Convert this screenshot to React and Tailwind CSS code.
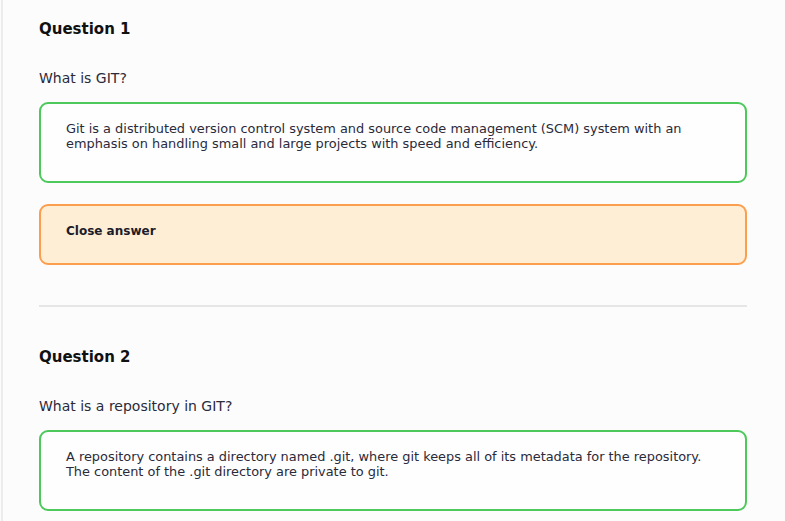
import React from "react";

const questions = [
  {
    title: "Question 1",
    question: "What is GIT?",
    answer:
      "Git is a distributed version control system and source code management (SCM) system with an emphasis on handling small and large projects with speed and efficiency.",
    open: true,
  },
  {
    title: "Question 2",
    question: "What is a repository in GIT?",
    answer:
      "A repository contains a directory named .git, where git keeps all of its metadata for the repository. The content of the .git directory are private to git.",
    open: false,
  },
];

function QuestionCard({ q, last }) {
  return (
    <div>
      <h2 className="text-[15px] font-bold text-[#111111] leading-[20px] pt-[19px]">{q.title}</h2>
      <p className="mt-[30px] text-[14px] leading-[18px] text-[#2a2a3a]">{q.question}</p>
      <div className="mt-[15px] h-[81px] rounded-[9px] border-2 border-[#4cc95a] bg-[#fefefe] pl-[25px] pr-[28px] pt-[17px]">
        <p className="text-[12.9px] leading-[15px] text-[#2a2a3a]">{q.answer}</p>
      </div>
      {q.open && (
        <div className="mt-[21px] h-[61px] rounded-[9px] border-2 border-[#fb9e4d] bg-[#ffeed6] pl-[25px] pt-[12px]">
          <span className="text-[12px] font-bold leading-[18px] text-[#1c1c2a]">Close answer</span>
        </div>
      )}
      {!last && <div className="mt-[40px] mb-[21px] h-[2px] bg-[#e6e6e6]" />}
    </div>
  );
}

export default function App() {
  return (
    <div className="flex min-h-[521px] bg-[#fcfcfc] font-['DejaVu_Sans',sans-serif]">
      <div className="w-[3px] border-r-2 border-[#ececec]" />
      <div className="w-[708px] ml-[36px]">
        {questions.map((q, i) => (
          <QuestionCard key={q.title} q={q} last={i === questions.length - 1} />
        ))}
      </div>
    </div>
  );
}
